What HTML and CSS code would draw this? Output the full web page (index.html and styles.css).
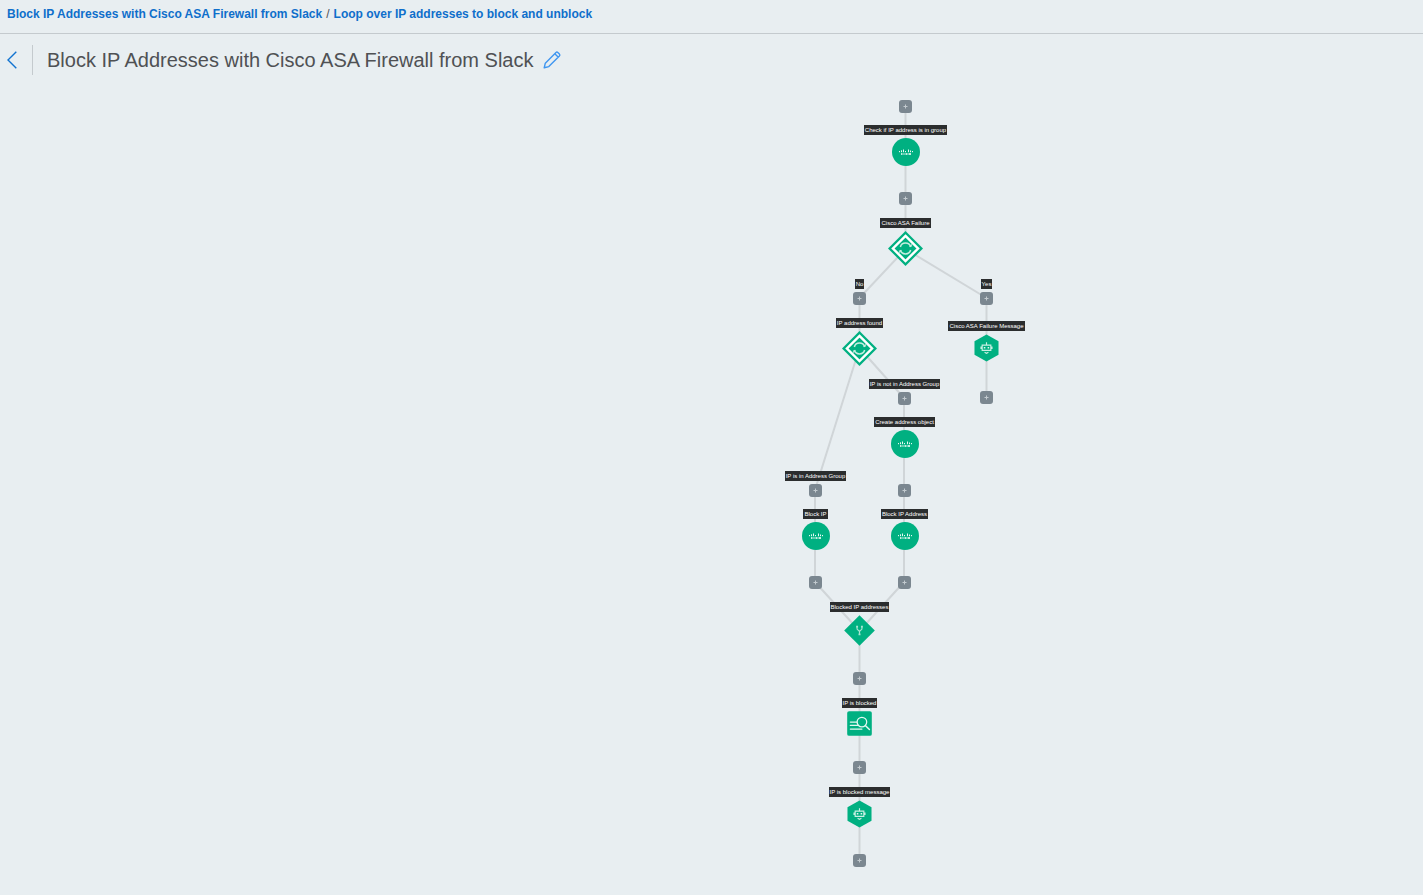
FILE: index.html
```html
<!DOCTYPE html>
<html lang="en">
<head>
<meta charset="utf-8">
<title>Block IP Addresses with Cisco ASA Firewall from Slack</title>
<link rel="stylesheet" href="styles.css">
</head>
<body>
<svg class="sprite" aria-hidden="true">
  <symbol id="i-plus" viewBox="0 0 13 13"><path d="M6.500 4.500v4M4.500 6.500h4" stroke="#c3cacf" fill="none"/></symbol>
  <symbol id="i-cisco" viewBox="0 0 28 28">
    <circle cx="14" cy="14" r="14" fill="#00b081"/>
    <path d="M7.500 13v1.200M9.500 12.300v1.900M11.500 11.500v2.700M13.500 13v1.200M16.500 11.500v2.700M18.500 12.500v1.700M20.500 13v1.200" stroke="#e8f8f3" fill="none"/>
    <path d="M9 16h1.500M11.500 16h1M13.500 16h2M16.500 16h2.500" stroke="#fff" stroke-width="1.600" fill="none"/>
  </symbol>
  <symbol id="i-loop" viewBox="0 0 34 34">
    <path d="M17 0 34 17 17 34 0 17z" fill="#00b081"/>
    <path d="M17 4.800 29.200 17 17 29.200 4.800 17z" fill="#00b081" stroke="#fff" stroke-width="2.400"/>
    <path d="M12 15.500a5.200 5.200 0 0 1 10 0M22 18.500a5.200 5.200 0 0 1-10 0" fill="none" stroke="#c4eddf" stroke-width="1.500"/>
    <path d="M20.800 14.800h2.200v-2zM13.200 19.200H11v2z" fill="#c4eddf" stroke="#c4eddf" stroke-width=".5"/>
  </symbol>
  <symbol id="i-bot" viewBox="0 0 26 28">
    <path d="M13 0 25.500 7v14L13 28 .5 21V7z" fill="#00b081"/>
    <path d="M13 8v3M8.500 11h9v5.500h-9zM7.300 12.500v2.500M18.700 12.500v2.500M11 18.500l2 1 2-1" fill="none" stroke="#c9efe3" stroke-width="1.200"/>
    <path d="M10.200 13h1.600v1.500h-1.600zM14.200 13h1.600v1.500h-1.600z" fill="#e4f7f1"/>
  </symbol>
  <symbol id="i-merge" viewBox="0 0 32 32">
    <path d="M16 .2 31.800 16 16 31.800.2 16z" fill="#00b081"/>
    <path d="M13.500 12.500v2l2.500 2.500 2.500-2.500v-2M16 17v3" fill="none" stroke="#a9e4d2" stroke-width="1.200"/>
    <path d="M12.500 11h2v2h-2zM17.500 11h2v2h-2zM15 19h2v2h-2z" fill="#a9e4d2"/>
  </symbol>
  <symbol id="i-search" viewBox="0 0 26 26">
    <rect x=".2" y=".2" width="25.600" height="25.600" rx="2" fill="#00b081"/>
    <path d="M3.500 11.500h7M3.500 15h8M3.500 18.800h12" fill="none" stroke="#e4f7f1" stroke-width="1.400" stroke-linecap="round"/>
    <circle cx="15.500" cy="11.500" r="5" fill="none" stroke="#e4f7f1" stroke-width="1.300"/>
    <path d="m19.300 15.300 4 4" stroke="#e4f7f1" stroke-width="1.500" stroke-linecap="round"/>
  </symbol>
</svg>

<nav class="breadcrumb" aria-label="Breadcrumb">
  <a href="#">Block IP Addresses with Cisco ASA Firewall from Slack</a>
  <span>/</span>
  <a href="#">Loop over IP addresses to block and unblock</a>
</nav>

<header class="titlebar">
  <button class="back" type="button" aria-label="Back"><svg viewBox="0 0 10 18"><path d="M9.300.8 1 9l8.300 8.200" fill="none" stroke="#1173d0" stroke-width="1.400"/></svg></button>
  <h1>Block IP Addresses with Cisco ASA Firewall from Slack</h1>
  <button class="edit" type="button" aria-label="Rename"><svg viewBox="0 0 18 18"><path d="m1.200 16.800 1.100-4.600L13 1.500q.9-.8 1.800 0l1.600 1.600q.8.900 0 1.800L5.800 15.600zM11.800 2.800l3.300 3.300" fill="none" stroke="#3f96f0" stroke-width="1.400" stroke-linejoin="round"/></svg></button>
</header>

<main class="canvas">
  <div class="graph">
    <svg class="edges" viewBox="780 86 260 800" aria-hidden="true">
      <path d="M905.500 106V249M905.500 249 859.500 298V348M905.500 249 986.500 298V398M859.500 348 904 398V582L859.500 631M859.500 348 815 490V582L859.500 631V860"/>
    </svg>

    <div class="step col-root start"><button class="add" type="button" aria-label="Add step"><svg><use href="#i-plus"/></svg></button></div>
    <div class="step col-root check"><span class="label">Check if IP address is in group</span><svg class="circle"><use href="#i-cisco"/></svg></div>
    <div class="step col-root after-check"><button class="add" type="button" aria-label="Add step"><svg><use href="#i-plus"/></svg></button></div>
    <div class="step col-root failure"><span class="label">Cisco ASA Failure</span><svg class="loop"><use href="#i-loop"/></svg></div>

    <div class="step col-main branch"><span class="label">No</span><button class="add" type="button" aria-label="Add step"><svg><use href="#i-plus"/></svg></button></div>
    <div class="step col-fail branch"><span class="label">Yes</span><button class="add" type="button" aria-label="Add step"><svg><use href="#i-plus"/></svg></button></div>
    <div class="step col-fail fail-message"><span class="label">Cisco ASA Failure Message</span><svg class="bot"><use href="#i-bot"/></svg></div>
    <div class="step col-fail fail-end"><button class="add" type="button" aria-label="Add step"><svg><use href="#i-plus"/></svg></button></div>

    <div class="step col-main found"><span class="label">IP address found</span><svg class="loop"><use href="#i-loop"/></svg></div>
    <div class="step col-right not-in-group"><span class="label">IP is not in Address Group</span><button class="add" type="button" aria-label="Add step"><svg><use href="#i-plus"/></svg></button></div>
    <div class="step col-right create"><span class="label">Create address object</span><svg class="circle"><use href="#i-cisco"/></svg></div>
    <div class="step col-right after-create"><button class="add" type="button" aria-label="Add step"><svg><use href="#i-plus"/></svg></button></div>
    <div class="step col-left in-group"><span class="label">IP is in Address Group</span><button class="add" type="button" aria-label="Add step"><svg><use href="#i-plus"/></svg></button></div>
    <div class="step col-left block"><span class="label">Block IP</span><svg class="circle"><use href="#i-cisco"/></svg></div>
    <div class="step col-right block"><span class="label">Block IP Address</span><svg class="circle"><use href="#i-cisco"/></svg></div>
    <div class="step col-left after-block"><button class="add" type="button" aria-label="Add step"><svg><use href="#i-plus"/></svg></button></div>
    <div class="step col-right after-block"><button class="add" type="button" aria-label="Add step"><svg><use href="#i-plus"/></svg></button></div>

    <div class="step col-main merge"><span class="label">Blocked IP addresses</span><svg class="join"><use href="#i-merge"/></svg></div>
    <div class="step col-main after-merge"><button class="add" type="button" aria-label="Add step"><svg><use href="#i-plus"/></svg></button></div>
    <div class="step col-main blocked"><span class="label">IP is blocked</span><svg class="square"><use href="#i-search"/></svg></div>
    <div class="step col-main after-blocked"><button class="add" type="button" aria-label="Add step"><svg><use href="#i-plus"/></svg></button></div>
    <div class="step col-main message"><span class="label">IP is blocked message</span><svg class="bot"><use href="#i-bot"/></svg></div>
    <div class="step col-main end"><button class="add" type="button" aria-label="Add step"><svg><use href="#i-plus"/></svg></button></div>
  </div>
</main>
</body>
</html>
```
FILE: styles.css
```css
* { box-sizing: border-box; }

body {
  margin: 0;
  background: #e8eef1;
  color: #4f5154;
  font-family: "Liberation Sans", Arial, sans-serif;
}

button {
  padding: 0;
  border: 0;
  background: none;
  cursor: pointer;
}

svg { display: block; flex: none; }

.sprite { position: absolute; width: 0; height: 0; }

.breadcrumb {
  display: flex;
  gap: 4px;
  padding: 6px 7px 11px;
  border-bottom: 1px solid #c4cace;
  font-size: 12px;
  line-height: 16px;
}

.breadcrumb a {
  color: #0f6fcb;
  font-weight: bold;
  text-decoration: none;
}

.titlebar {
  display: flex;
  align-items: center;
  padding: 11px 7px;
}

.back {
  display: flex;
  align-items: center;
  width: 26px;
  height: 30px;
  border-right: 1px solid #c4cace;
}

.back svg { width: 10px; height: 18px; }

h1 {
  margin: 0 10px 0 14px;
  font-size: 20px;
  font-weight: normal;
  line-height: 30px;
}

.edit svg { width: 18px; height: 18px; }

.canvas { overflow: hidden; }

/* Steps are placed on a free canvas; each is centred on its column. */
.graph {
  position: relative;
  width: 260px;
  height: 800px;
  margin-left: 780px;
}

.edges { width: 260px; height: 800px; }

.edges path {
  fill: none;
  stroke: #d0d5d8;
  stroke-width: 2;
}

.step {
  position: absolute;
  display: flex;
  flex-direction: column;
  align-items: center;
  gap: 3px;
  width: 101px;
}

.label {
  padding: 0 1px;
  background: #2b2d2e;
  color: #fff;
  font-size: 6px;
  line-height: 10px;
  white-space: nowrap;
}

.add {
  width: 13px;
  height: 13px;
  border-radius: 3px;
  background: #7b8790;
}

.add svg { width: 13px; height: 13px; }
.circle { width: 28px; height: 28px; }
.loop { width: 35px; height: 35px; }
.loop use { width: 35px; height: 35px; }
.bot { width: 25px; height: 28px; }
.join { width: 31px; height: 31px; }
.square { width: 25px; height: 25px; }

.col-root { left: 75px; }
.col-main { left: 29px; }
.col-fail { left: 156px; }
.col-right { left: 74px; }
.col-left { left: -15px; }

.start { top: 14px; }
.check { top: 39px; }
.after-check { top: 106px; }
.failure { top: 132px; }
.branch { top: 193px; }
.fail-message { top: 235px; }
.fail-end { top: 305px; }
.found { top: 232px; }
.not-in-group { top: 293px; }
.create { top: 331px; }
.after-create { top: 398px; }
.in-group { top: 385px; }
.block { top: 423px; }
.after-block { top: 490px; }
.merge { top: 516px; }
.after-merge { top: 586px; }
.blocked { top: 612px; }
.after-blocked { top: 675px; }
.message { top: 701px; }
.end { top: 768px; }
```
